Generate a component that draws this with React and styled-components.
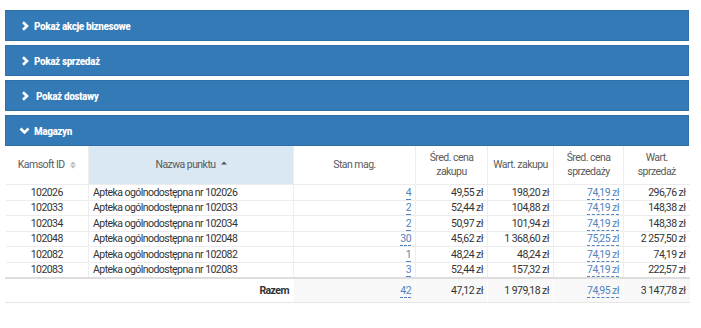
import React from "react";
import styled, { createGlobalStyle } from "styled-components";

const GlobalStyle = createGlobalStyle`
  html, body {
    margin: 0;
    padding: 0;
    background: #fff;
  }
  body {
    font-family: Roboto, "Liberation Sans", Arial, sans-serif;
    color: #333;
  }
`;

const Page = styled.div`
  display: flex;
  flex-direction: column;
  gap: 4px;
  padding: 10px 12px 0 5px;
  width: 684px;
`;

const Panel = styled.section`
  display: flex;
  flex-direction: column;
`;

const PanelHeading = styled.div`
  display: flex;
  align-items: center;
  gap: 4px;
  height: 31px;
  box-sizing: border-box;
  padding-left: ${(p) => (p.$open ? "13px" : "15px")};
  background: #337ab7;
  border: 1px solid #2e6fa8;
  color: #fff;
  font-family: "Liberation Sans Narrow", "Roboto Condensed", Roboto, sans-serif;
  font-stretch: condensed;
  font-weight: 700;
  font-size: 11.5px;
  letter-spacing: -0.5px;
  cursor: pointer;
`;

const Title = styled.span`
  margin-left: ${(p) => p.$shift || 0}px;
`;

const Chevron = ({ open }) =>
  open ? (
    <svg width="11" height="8" viewBox="0 0 11 8">
      <polyline points="1.5,1.5 5.5,5.5 9.5,1.5" fill="none" stroke="#fff" strokeWidth="2.6" />
    </svg>
  ) : (
    <svg width="9" height="10" viewBox="0 0 9 10">
      <polyline points="2,1.2 6,5 2,8.8" fill="none" stroke="#fff" strokeWidth="2.6" />
    </svg>
  );

const Table = styled.table`
  width: 100%;
  border-collapse: collapse;
  table-layout: fixed;
  font-size: 10.5px;
  letter-spacing: -0.55px;
  font-family: Roboto, "Liberation Sans", sans-serif;
`;

const Th = styled.th`
  height: 38px;
  padding: 0 3px;
  font-weight: 400;
  color: #5a5a5a;
  line-height: 14px;
  text-align: center;
  vertical-align: middle;
  white-space: nowrap;
  background: ${(p) => (p.$sorted ? "#d9e8f3" : "#fff")};
  border-left: 1px solid #eee;
  &:first-child {
    border-left: none;
  }
`;

const Td = styled.td`
  height: 13.5px;
  padding: 1px 4px 0;
  text-align: ${(p) => p.$align || "right"};
  border-top: 1px solid #ececec;
  border-left: 1px solid #eee;
  white-space: nowrap;
  line-height: 12px;
  &:first-child {
    border-left: none;
  }
`;

const FootTd = styled.td`
  height: 23px;
  padding: 0 4px;
  text-align: right;
  border-top: 2px solid #ddd;
  border-bottom: 1px solid #e6e6e6;
  border-left: 1px solid #fff;
  background: ${(p) => (p.$plain ? "#fff" : "#f8f8f8")};
  font-weight: ${(p) => (p.$bold ? 700 : 400)};
  white-space: nowrap;
`;

const Editable = styled.span`
  color: #5283bd;
  border-bottom: 1px dashed #5283bd;
  cursor: pointer;
`;

const SortIcon = ({ dir }) => (
  <svg
    width="6"
    height="8"
    viewBox="0 0 6 8"
    style={{ marginLeft: 5, verticalAlign: "-1px" }}
  >
    {dir !== "down" && <polygon points="0,3.4 3,0.4 6,3.4" fill={dir ? "#555" : "#bbb"} />}
    {!dir && <polygon points="0,4.6 3,7.6 6,4.6" fill="#bbb" />}
  </svg>
);

const rows = [
  { id: "102026", stan: "4", zak: "49,55 zł", wz: "198,20 zł", sp: "74,19 zł", ws: "296,76 zł" },
  { id: "102033", stan: "2", zak: "52,44 zł", wz: "104,88 zł", sp: "74,19 zł", ws: "148,38 zł" },
  { id: "102034", stan: "2", zak: "50,97 zł", wz: "101,94 zł", sp: "74,19 zł", ws: "148,38 zł" },
  { id: "102048", stan: "30", zak: "45,62 zł", wz: "1 368,60 zł", sp: "75,25 zł", ws: "2 257,50 zł" },
  { id: "102082", stan: "1", zak: "48,24 zł", wz: "48,24 zł", sp: "74,19 zł", ws: "74,19 zł" },
  { id: "102083", stan: "3", zak: "52,44 zł", wz: "157,32 zł", sp: "74,19 zł", ws: "222,57 zł" },
];

const closed = ["Pokaż akcje biznesowe", "Pokaż sprzedaż", "Pokaż dostawy"];

export default function App() {
  return (
    <>
      <GlobalStyle />
      <Page>
        {closed.map((t, i) => (
          <PanelHeading key={t}>
            <Chevron />
            <Title $shift={i === 2 ? 2 : 0}>{t}</Title>
          </PanelHeading>
        ))}
        <Panel>
          <PanelHeading $open>
            <Chevron open />
            <Title>Magazyn</Title>
          </PanelHeading>
          <Table>
            <colgroup>
              <col style={{ width: 83 }} />
              <col style={{ width: 205 }} />
              <col style={{ width: 122 }} />
              <col style={{ width: 72 }} />
              <col style={{ width: 66 }} />
              <col style={{ width: 70 }} />
              <col style={{ width: 66 }} />
            </colgroup>
            <thead>
              <tr>
                <Th>
                  Kamsoft ID
                  <SortIcon />
                </Th>
                <Th $sorted>
                  Nazwa punktu
                  <SortIcon dir="up" />
                </Th>
                <Th>Stan mag.</Th>
                <Th>
                  Śred. cena
                  <br />
                  zakupu
                </Th>
                <Th>Wart. zakupu</Th>
                <Th>
                  Śred. cena
                  <br />
                  sprzedaży
                </Th>
                <Th>
                  Wart.
                  <br />
                  sprzedaż
                </Th>
              </tr>
            </thead>
            <tbody>
              {rows.map((r) => (
                <tr key={r.id}>
                  <Td $align="center">{r.id}</Td>
                  <Td $align="left">Apteka ogólnodostępna nr {r.id}</Td>
                  <Td>
                    <Editable>{r.stan}</Editable>
                  </Td>
                  <Td>{r.zak}</Td>
                  <Td>{r.wz}</Td>
                  <Td>
                    <Editable>{r.sp}</Editable>
                  </Td>
                  <Td>{r.ws}</Td>
                </tr>
              ))}
            </tbody>
            <tfoot>
              <tr>
                <FootTd colSpan={2} $plain $bold>
                  Razem
                </FootTd>
                <FootTd>
                  <Editable>42</Editable>
                </FootTd>
                <FootTd>47,12 zł</FootTd>
                <FootTd>1 979,18 zł</FootTd>
                <FootTd>
                  <Editable>74,95 zł</Editable>
                </FootTd>
                <FootTd>3 147,78 zł</FootTd>
              </tr>
            </tfoot>
          </Table>
        </Panel>
      </Page>
    </>
  );
}
